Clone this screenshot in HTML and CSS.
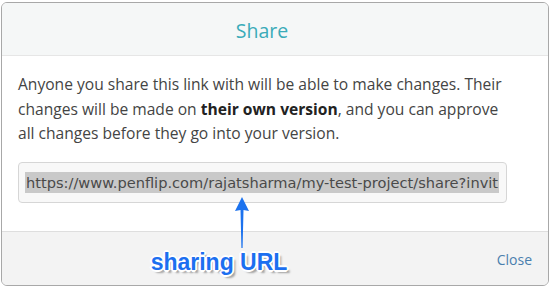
FILE: index.html
```html
<!DOCTYPE html>
<html lang="en">
<head>
  <meta charset="UTF-8" />
  <meta name="viewport" content="width=device-width, initial-scale=1.0" />
  <title>Share | Penflip</title>
  <link rel="stylesheet" href="styles.css">
</head>
<body>
  <div class="modal">
    <div class="modal-header">
      <h3>Share</h3>
    </div>

    <div class="modal-body">
      <p>Anyone you share this link with will be able to make changes. Their changes will be made on <strong>their own version</strong>, and you can approve all changes before they go into your version.</p>
      <div class="share-link">
        <span class="selected">https://www.penflip.com/rajatsharma/my-test-project/share?invit</span>
      </div>
    </div>

    <div class="modal-footer">
      <a href="#" class="close-link">Close</a>
    </div>

    <!-- annotation -->
    <div class="note">
      <svg class="note-arrow" width="16" height="52" viewBox="0 0 16 52">
        <path d="M8 0 L15 14 L9.5 13 L8.6 51 L7.4 51 L6.5 13 L1 14 Z" fill="#1c72ee" />
      </svg>
      <span class="note-label">sharing URL</span>
    </div>
  </div>
</body>
</html>
```

FILE: styles.css
```css
/* Reset and base styles */
* {
  box-sizing: border-box;
  margin: 0;
  padding: 0;
}
body {
  font-family: "Open Sans", Arial, sans-serif;
  background-color: #fff;
  color: #444;
  padding: 2px 1px 1px 1px;
}

/* Modal */
.modal {
  position: relative;
  width: 548px;
  height: 284px;
  border: 1px solid #a8a8a8;
  border-radius: 6px;
  overflow: hidden;
  display: flex;
  flex-direction: column;
}

.modal-header {
  height: 53px;
  background-color: #f5f7f7;
  border-bottom: 1px solid #e6e6e6;
  display: flex;
  align-items: center;
  justify-content: center;
  padding-right: 26px;
}
.modal-header h3 {
  font-weight: 400;
  font-size: 19.5px;
  color: #3aabb9;
  padding-top: 2px;
}

.modal-body {
  background: #fff;
  padding: 16px 16px 0 16px;
  height: 175px;
}
.modal-body p {
  font-size: 15.6px;
  line-height: 24.5px;
  color: #444;
  width: 500px;
}
.modal-body strong {
  color: #222;
}

.share-link {
  margin-top: 16px;
  width: 489px;
  height: 41px;
  border: 1px solid #d6d6d6;
  border-radius: 4px;
  background: #f8f8f8;
  padding: 0 6px;
  display: flex;
  align-items: center;
  overflow: hidden;
  white-space: nowrap;
}
.selected {
  font-family: "DejaVu Sans", Verdana, sans-serif;
  font-size: 14.6px;
  line-height: 21px;
  color: #4a4a4a;
  background: #c9c9c9;
  padding: 0 1px;
}

.modal-footer {
  flex: 1;
  background: #f3f3f3;
  border-top: 1px solid #dedede;
  display: flex;
  align-items: center;
  justify-content: flex-end;
  padding: 0 16px 0 0;
}
.close-link {
  font-size: 14px;
  color: #4a7fae;
  text-decoration: none;
  padding-top: 2px;
}
.close-link:hover {
  text-decoration: underline;
}

/* Annotation drawn over the dialog */
.note {
  position: absolute;
  left: 146px;
  top: 194px;
  width: 142px;
  display: flex;
  flex-direction: column;
  align-items: center;
}
.note-arrow {
  display: block;
  margin-left: 46px;
}
.note-label {
  font-family: "Liberation Sans", Arial, sans-serif;
  font-weight: 700;
  font-size: 23px;
  line-height: 26px;
  white-space: nowrap;
  color: #1c6ff0;
  text-shadow:
    -1px -1px 0 #fff, 1px -1px 0 #fff, -1px 1px 0 #fff, 1px 1px 0 #fff,
    -2px 0 0 #fff, 2px 0 0 #fff, 0 -2px 0 #fff, 0 2px 0 #fff,
    3px 3px 2px rgba(0,0,0,0.35);
}
```
